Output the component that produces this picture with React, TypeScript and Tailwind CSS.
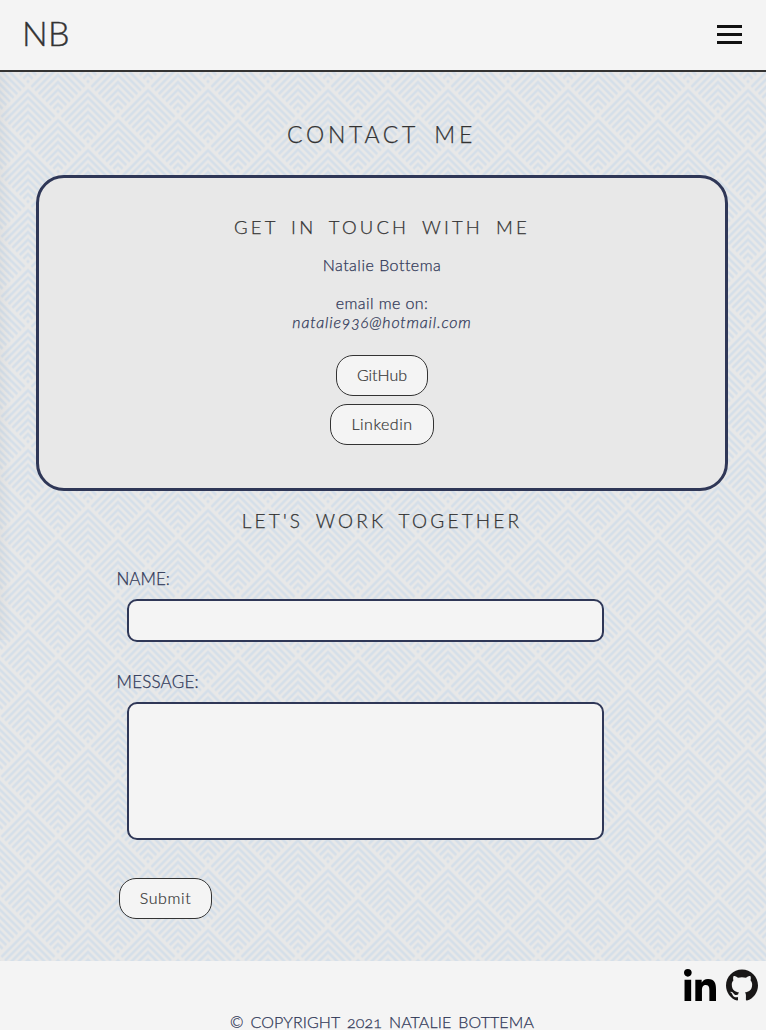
import React from "react";
import { SiGithub } from "react-icons/si";

const chevrons = Array.from({ length: 8 }, (_, i) => i);

function Diamond({ x, y }: { x: number; y: number }) {
  return (
    <g transform={`translate(${x} ${y})`} clipPath="url(#diamond)">
      {chevrons.map((i) => (
        <path
          key={i}
          d={`M-30 ${34.8 + i * 7.3}L0 ${4.8 + i * 7.3}L30 ${34.8 + i * 7.3}`}
          fill="none"
          stroke="#d5dfe9"
          strokeWidth={2.6}
        />
      ))}
    </g>
  );
}

function Backdrop() {
  return (
    <svg className="absolute inset-0 h-full w-full" aria-hidden="true">
      <defs>
        <clipPath id="diamond">
          <path d="M0 1.5L28.3 29.8L0 58.1L-28.3 29.8Z" />
        </clipPath>
        <pattern id="weave" width="60" height="60" patternUnits="userSpaceOnUse" x="-2" y="13.5">
          <Diamond x={30} y={0} />
          <Diamond x={0} y={30} />
          <Diamond x={60} y={30} />
          <Diamond x={0} y={-30} />
          <Diamond x={60} y={-30} />
        </pattern>
      </defs>
      <rect width="100%" height="100%" fill="url(#weave)" />
    </svg>
  );
}

const pill =
  "flex h-[41px] items-center justify-center rounded-[17px] border border-[#333] bg-[#f4f4f4] pb-[2px] text-[16px] font-light text-[#333] [-webkit-text-stroke:0.2px]";

export default function App() {
  return (
    <div className="flex h-[1030px] w-[766px] flex-col overflow-hidden bg-[#f4f4f4] font-['Lato','Open_Sans',sans-serif] font-light oldstyle-nums text-[#2f3757] [-webkit-text-stroke:0.25px]">
      <header className="flex h-[72px] shrink-0 items-center justify-between border-b-2 border-[#333] pb-[2px] pl-[22px] pr-6">
        <div className="pb-[3px] text-[34px] leading-[40px] tracking-[0.3px] text-[#333] [-webkit-text-stroke:0.4px]">NB</div>
        <button className="flex flex-col gap-[5px]" aria-label="Menu">
          <span className="h-[3px] w-[25px] bg-[#111]" />
          <span className="h-[3px] w-[25px] bg-[#111]" />
          <span className="h-[3px] w-[25px] bg-[#111]" />
        </button>
      </header>
      <main className="relative h-[889px] shrink-0 bg-[#e8e8e8]">
        <Backdrop />
        <div className="absolute left-0 top-0 h-[568px] w-3 bg-linear-to-r from-black/3 to-transparent" />
        <div className="relative flex flex-col px-9 pt-[46px]">
          <h1 className="h-[57px] pr-[3px] text-center text-[23px] leading-[32px] tracking-[3.7px] text-[#333] [word-spacing:6px]">CONTACT ME</h1>
          <section className="flex h-[316px] w-[692px] flex-col items-center rounded-[28px] border-3 border-[#2f3757] bg-[#e8e8e8] pt-9">
            <h2 className="text-[18.5px] leading-[26px] tracking-[3.2px] text-[#333] [word-spacing:4.8px]">GET IN TOUCH WITH ME</h2>
            <p className="mt-[15px] text-[16px] leading-[19px] tracking-[0.5px]">Natalie Bottema</p>
            <p className="mt-[19px] text-[16px] leading-[19px] tracking-[0.4px]">email me on:</p>
            <p className="text-[16px] italic leading-[19px] tracking-[0.8px]">natalie936@hotmail.com</p>
            <a className={`${pill} mt-[24px] w-[92px]`}>GitHub</a>
            <a className={`${pill} mt-2 w-[104px] tracking-[0.5px]`}>Linkedin</a>
          </section>
          <h2 className="mt-[17px] pr-[2px] text-center text-[19px] leading-[26px] tracking-[3.2px] text-[#333] [word-spacing:4.5px]">LET'S WORK TOGETHER</h2>
          <form className="flex flex-col pl-[80.5px]">
            <label className="mt-[35px] text-[17px] leading-[20px]" htmlFor="name">NAME:</label>
            <input id="name" className="ml-[10.5px] mt-[10px] h-[43px] w-[477px] rounded-[10px] border-2 border-[#2f3757] bg-[#f4f4f4]" />
            <label className="mt-[30px] text-[17px] leading-[20px] tracking-[0.2px]" htmlFor="message">MESSAGE:</label>
            <textarea id="message" className="ml-[10.5px] mt-[10px] h-[138px] w-[477px] resize-none rounded-[10px] border-2 border-[#2f3757] bg-[#f4f4f4]" />
            <button type="button" className={`${pill} ml-[2.5px] mt-[38px] w-[93px] tracking-[0.6px]`}>Submit</button>
          </form>
        </div>
      </main>
      <footer className="flex flex-col px-2 pt-2">
        <div className="flex justify-end gap-[10px]">
          <svg className="h-8 w-8" viewBox="0 0 448 448" fill="#000">
            <path d="M100.28 448H7.4V148.9h92.88zM53.79 108.1C24.09 108.1 0 83.5 0 53.8a53.79 53.79 0 0 1 107.58 0c0 29.7-24.1 54.3-53.79 54.3zM447.9 448h-92.68V302.4c0-34.7-.7-79.2-48.29-79.2-48.29 0-55.69 37.7-55.69 76.7V448h-92.78V148.9h89.08v40.8h1.3c12.4-23.5 42.69-48.3 87.88-48.3 94 0 111.28 61.9 111.28 142.3V448z" />
          </svg>
          <SiGithub className="h-8 w-8 text-[#191717]" />
        </div>
        <p className="mt-[11px] whitespace-nowrap pr-[2px] text-center text-[16px] leading-[19px] tracking-[0.1px] [word-spacing:2.6px]">© COPYRIGHT 2021 NATALIE BOTTEMA</p>
      </footer>
    </div>
  );
}
